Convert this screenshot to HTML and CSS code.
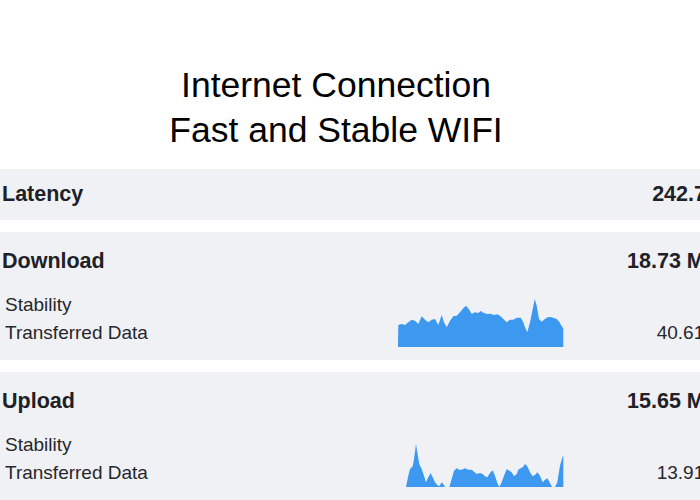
FILE: index.html
```html
<!DOCTYPE html>
<html lang="en">
<head>
<meta charset="UTF-8" />
<meta name="viewport" content="width=device-width, initial-scale=1" />
<title>Internet Connection</title>
<link rel="stylesheet" href="styles.css">
</head>
<body>

<div class="page">
  <h1 class="title">Internet Connection<br>Fast and Stable WIFI</h1>

  <!-- Latency -->
  <div class="row row-latency">
    <div class="row-head">
      <span>Latency</span>
      <span>242.7 ms</span>
    </div>
  </div>

  <!-- Download -->
  <div class="row">
    <div class="row-head">
      <span>Download</span>
      <span>18.73 Mbps</span>
    </div>
    <div class="row-sub">
      <div class="sub-labels">
        <div>Stability</div>
        <div>Transferred Data</div>
      </div>
      <svg class="chart" viewBox="0 0 166 50" preserveAspectRatio="none">
        <path d="M0 50 L0.3 28 L3.7 27 L7 28 L10.3 25.3 L13.7 22.7 L17 23.7 L20.3 27 L23.7 19.3 L27 22.7 L30.3 25.3 L33.7 22.7 L37 22 L40.3 28 L43.7 18 L46 25.3 L48.7 30.3 L52 23.7 L55.3 19.3 L58.7 18.7 L62 15.3 L65.3 11.3 L68 8.7 L71.3 12.7 L73.7 17 L77 15.3 L80.3 16 L82.7 14 L86 16 L89.3 17 L92.7 16.7 L96 18 L99.3 17.3 L102.7 19.3 L106 22.7 L108.7 25.3 L112 22.7 L115.3 22.7 L118.7 20.7 L122.7 20.7 L125.3 25.3 L127 30.3 L129.3 35.3 L132 25.3 L134.7 12 L136.7 2 L138.7 8.7 L141 22 L143.7 24.7 L146 22.7 L149.3 20.3 L152.7 20 L156 21 L158.7 22 L161.3 24.7 L163.7 29.3 L165.3 31.3 L165.3 50 Z"/>
      </svg>
      <div class="sub-values">
        <div>&nbsp;</div>
        <div>40.61 MB</div>
      </div>
    </div>
  </div>

  <!-- Upload -->
  <div class="row">
    <div class="row-head">
      <span>Upload</span>
      <span>15.65 Mbps</span>
    </div>
    <div class="row-sub">
      <div class="sub-labels">
        <div>Stability</div>
        <div>Transferred Data</div>
      </div>
      <svg class="chart" viewBox="0 0 166 50" preserveAspectRatio="none">
        <path d="M8 50 L10.3 38.7 L12 32 L14.7 29.3 L16 22 L18 7 L19.3 15.3 L21.3 27 L23.7 32 L26 38.7 L28 45.3 L30.3 40.3 L32.7 36 L34.7 40.3 L37 45.3 L39.3 48 L41.3 49.3 L43.7 45.3 L45.3 47 L47 50 L51.3 50 L53.7 42 L56 33.7 L58.7 31.3 L61.3 32.7 L63.7 32.7 L67 31.3 L70.3 32.7 L73.7 32.7 L76 34.7 L78.7 37 L82 36 L84.7 37 L87 39.3 L89.3 40.3 L92 36 L94.7 33.3 L97 38.7 L99.3 46 L101.3 50 L103.7 45.3 L106 38.7 L108.7 32 L111.3 33.7 L113.7 35.3 L116 39.3 L118.7 37 L120.3 32.7 L122.7 31.3 L124.7 30.3 L127 27 L129.3 29.3 L132 35.3 L134.7 39.3 L137 38 L139.3 35.3 L142 38.7 L144.7 45.3 L147 42.7 L149.3 41.3 L152 46 L154 50 L157 50 L159.3 45.3 L162 28.7 L164.7 19.3 L165.3 19.3 L165.3 50 Z"/>
      </svg>
      <div class="sub-values">
        <div>&nbsp;</div>
        <div>13.91 MB</div>
      </div>
    </div>
  </div>
</div>

</body>
</html>
```

FILE: styles.css
```css
html, body {
  overflow: hidden;
}
body {
  margin: 0;
  background: #fff;
  font-family: 'Liberation Sans', Arial, sans-serif;
  color: #202127;
}
.page {
  width: 745px;
}
.title {
  width: 672px;
  margin: 63px 0 16px;
  font-size: 35.5px;
  line-height: 45px;
  font-weight: 400;
  text-align: center;
  color: #000;
}
.row {
  background: #f0f1f5;
  padding: 15px 2px 13px;
  margin-bottom: 12px;
}
.row-latency {
  padding: 11px 2px 12px;
}
.row-head {
  display: flex;
  justify-content: space-between;
  font-size: 21.5px;
  line-height: 28px;
  font-weight: 700;
}
.row-sub {
  display: flex;
  margin-top: 16px;
  padding: 0 5px 0 3px;
  font-size: 19px;
  line-height: 28px;
  color: #26272c;
}
.sub-labels {
  width: 393px;
}
.chart {
  width: 166px;
  height: 50px;
  align-self: flex-end;
  fill: #3d98ef;
}
.sub-values {
  flex: 1;
  text-align: right;
}
```
